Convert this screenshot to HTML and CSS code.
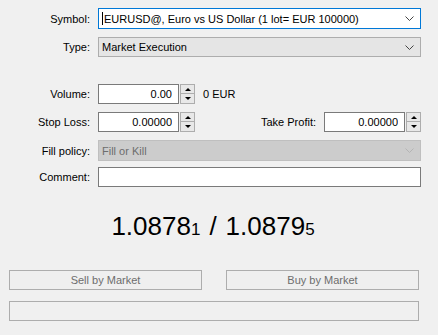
FILE: index.html
```html
<!DOCTYPE html>
<html lang="en">

<head>
    <meta charset="utf-8" />
    <title>Order</title>
    <link rel="stylesheet" href="styles.css">
</head>

<body>
    <form class="order">
        <div class="row row-tall">
            <label class="lbl">Symbol:</label>
            <div class="combo combo-focus">
                <span class="caret"></span>
                <span class="combo-text">EURUSD@, Euro vs US Dollar (1 lot= EUR 100000)</span>
                <svg class="chev" width="9" height="5" viewBox="0 0 9 5"><polyline points="0.5,0.5 4.5,4.5 8.5,0.5" fill="none" stroke="#444" stroke-width="1" /></svg>
            </div>
        </div>
        <div class="row row-type">
            <label class="lbl">Type:</label>
            <div class="combo combo-grey">
                <span class="combo-text">Market Execution</span>
                <svg class="chev" width="9" height="5" viewBox="0 0 9 5"><polyline points="0.5,0.5 4.5,4.5 8.5,0.5" fill="none" stroke="#444" stroke-width="1" /></svg>
            </div>
        </div>

        <div class="row row-volume">
            <label class="lbl">Volume:</label>
            <input class="num" type="text" value="0.00">
            <div class="spin">
                <span class="spin-up"><i></i></span>
                <span class="spin-down"><i></i></span>
            </div>
            <span class="unit">0 EUR</span>
        </div>
        <div class="row row-gap">
            <label class="lbl">Stop Loss:</label>
            <input class="num" type="text" value="0.00000">
            <div class="spin">
                <span class="spin-up"><i></i></span>
                <span class="spin-down"><i></i></span>
            </div>
            <div class="tp">
                <label class="lbl-tp">Take Profit:</label>
                <input class="num" type="text" value="0.00000">
                <div class="spin">
                    <span class="spin-up"><i></i></span>
                    <span class="spin-down"><i></i></span>
                </div>
            </div>
        </div>
        <div class="row row-tall row-gap">
            <label class="lbl">Fill policy:</label>
            <div class="combo combo-disabled">
                <span class="combo-text">Fill or Kill</span>
                <svg class="chev" width="9" height="5" viewBox="0 0 9 5"><polyline points="0.5,0.5 4.5,4.5 8.5,0.5" fill="none" stroke="#b4b4b4" stroke-width="1" /></svg>
            </div>
        </div>
        <div class="row row-comment">
            <label class="lbl">Comment:</label>
            <input class="text" type="text" value="">
        </div>

        <div class="price">
            <span>1.0878<small>1</small></span>
            <span class="slash">/</span>
            <span>1.0879<small>5</small></span>
        </div>

        <div class="buttons">
            <button type="button" class="btn">Sell by Market</button>
            <button type="button" class="btn">Buy by Market</button>
        </div>
        <div class="progress"></div>
    </form>
</body>

</html>
```

FILE: styles.css
```css
html,
body {
    margin: 0;
    background-color: #f0f0f0;
}

body {
    width: 438px;
    height: 335px;
    overflow: hidden;
    font-family: "Liberation Sans", Arial, sans-serif;
    font-size: 11px;
    color: #000;
}

.order {
    padding: 8px 17px 0 9px;
}

.row {
    display: flex;
    align-items: center;
    height: 20px;
}

.row-tall {
    height: 21px;
}

.row-type {
    margin-top: 8px;
}

.row-volume {
    margin-top: 27px;
}

.row-gap {
    margin-top: 8px;
}

.row-comment {
    margin-top: 6px;
}

.lbl {
    width: 81px;
    margin-right: 8px;
    text-align: right;
    flex-shrink: 0;
}

.combo {
    display: flex;
    align-items: center;
    flex: 1;
    height: 21px;
    padding: 0 0 0 3px;
    box-sizing: border-box;
    border: 1px solid #adadad;
}

.combo-focus {
    background-color: #fff;
    border-color: #0078d7;
}

.combo-grey {
    height: 20px;
    background-color: #e5e5e5;
}

.combo-disabled {
    background-color: #cccccc;
    border-color: #bfbfbf;
    color: #6d6d6d;
}

.caret {
    width: 1px;
    height: 13px;
    margin-right: 1px;
    background-color: #000;
}

.combo-text {
    flex: 1;
    white-space: nowrap;
}

.chev {
    margin-right: 6px;
}

.num,
.text {
    height: 20px;
    margin: 0;
    padding: 0 6px 0 2px;
    box-sizing: border-box;
    border: 1px solid #7a7a7a;
    background-color: #fff;
    font-family: inherit;
    font-size: 11px;
    color: #000;
    outline: none;
}

.num {
    width: 81px;
    text-align: right;
}

.text {
    flex: 1;
}

.spin {
    display: flex;
    flex-direction: column;
    width: 15px;
    height: 20px;
    margin-left: 1px;
}

.spin span {
    display: flex;
    align-items: center;
    justify-content: center;
    height: 10px;
    box-sizing: border-box;
    border: 1px solid #adadad;
    background-color: #e8e8e8;
}

.spin-down {
    border-top: none !important;
}

.spin-up i {
    border-left: 3px solid transparent;
    border-right: 3px solid transparent;
    border-bottom: 3px solid #000;
}

.spin-down i {
    border-left: 3px solid transparent;
    border-right: 3px solid transparent;
    border-top: 3px solid #000;
}

.unit {
    margin-left: 8px;
}

.tp {
    display: flex;
    align-items: center;
    margin-left: auto;
}

.lbl-tp {
    margin-right: 8px;
}

.price {
    display: flex;
    justify-content: center;
    align-items: baseline;
    gap: 9px;
    margin-top: 24px;
    padding-right: 4px;
    font-size: 26px;
    line-height: 30px;
}

.price small {
    font-size: 17px;
}

.buttons {
    display: flex;
    justify-content: space-between;
    margin-top: 25px;
    padding-right: 2px;
}

.btn {
    width: 193px;
    height: 20px;
    margin: 0;
    padding: 0;
    border: 1px solid #adadad;
    background-color: #efefef;
    font-family: inherit;
    font-size: 11px;
    color: #6d6d6d;
}

.progress {
    height: 20px;
    margin-top: 11px;
    margin-right: 2px;
    box-sizing: border-box;
    border: 1px solid #adadad;
    background-color: #f0f0f0;
}
```
